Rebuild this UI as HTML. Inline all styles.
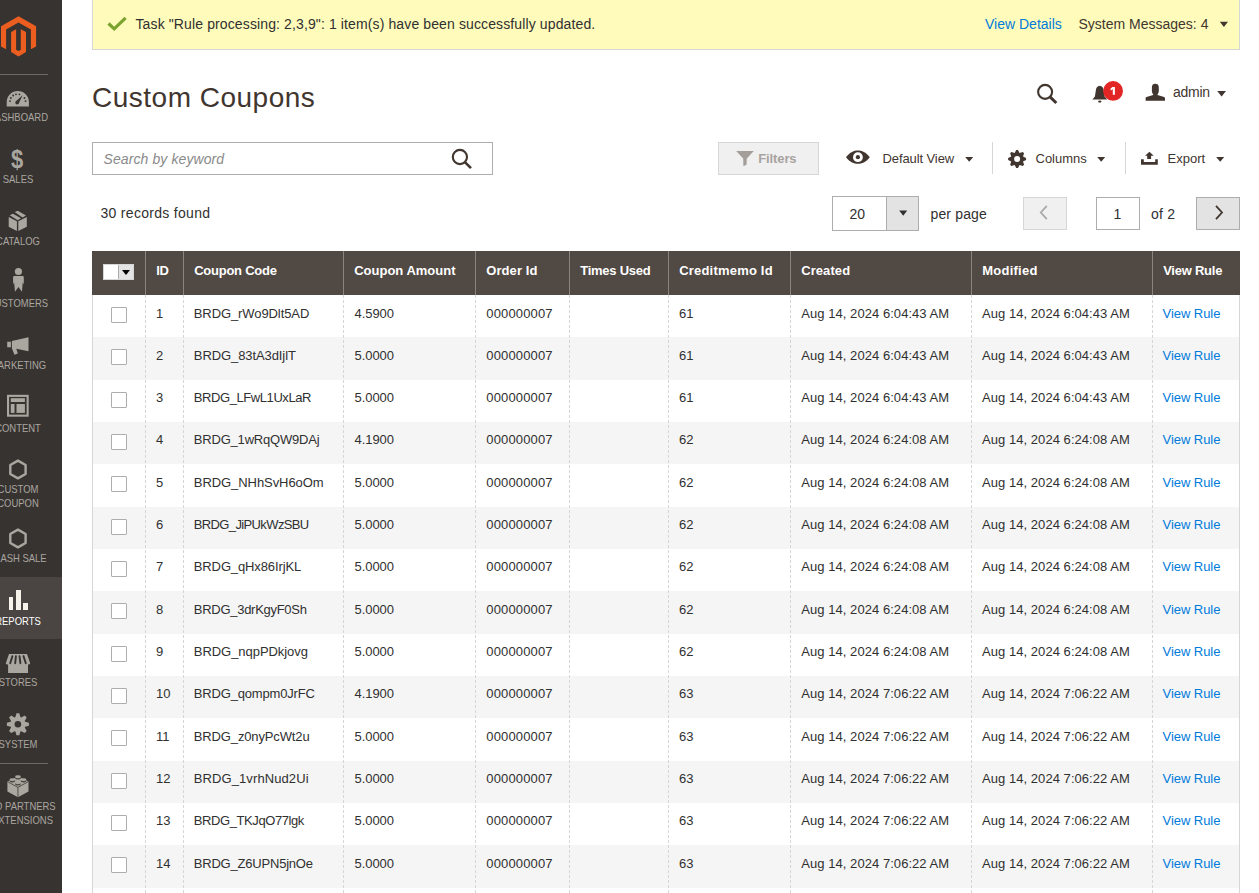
<!DOCTYPE html><html><head><meta charset="utf-8"><style>
html,body{margin:0;padding:0;}
body{width:1259px;height:893px;overflow:hidden;position:relative;background:#fff;font-family:"Liberation Sans", sans-serif;}
.t{position:absolute;white-space:pre;}
.b{position:absolute;box-sizing:border-box;}
</style></head><body>
<div class="b" style="left:0px;top:0px;width:62px;height:893px;background:#373330"></div>
<svg class="b" style="left:0px;top:14px" width="40" height="45" viewBox="0 0 40 45"><path fill="#eb5e1f" d="M18.5 2.3 L36.1 12.25 V32.5 L30.9 35.3 V15.5 L18.5 8.4 L6.1 15.5 V35.3 L1 32.5 V12.25 Z"/><path fill="#eb5e1f" d="M11.1 18.1 L16.1 15.2 V35.7 L18.5 37 L20.8 35.7 V15.2 L26 18.1 V38.1 L18.5 42.6 L11.1 38.1 Z"/></svg>
<div class="b" style="left:0px;top:74px;width:48px;height:1px;background:#736963"></div>
<div class="b" style="left:0px;top:577px;width:62px;height:62px;background:#4a4542"></div>
<div class="t" style="left:-82px;width:200px;text-align:center;top:110.19px;font-size:11px;line-height:14px;color:#aaa6a0;transform:scaleX(0.86);transform-origin:50% 0;">DASHBOARD</div>
<div class="t" style="left:-82px;width:200px;text-align:center;top:172.49px;font-size:11px;line-height:14px;color:#aaa6a0;transform:scaleX(0.86);transform-origin:50% 0;">SALES</div>
<div class="t" style="left:-82px;width:200px;text-align:center;top:234.19px;font-size:11px;line-height:14px;color:#aaa6a0;transform:scaleX(0.86);transform-origin:50% 0;">CATALOG</div>
<div class="t" style="left:-82px;width:200px;text-align:center;top:296.49px;font-size:11px;line-height:14px;color:#aaa6a0;transform:scaleX(0.86);transform-origin:50% 0;">CUSTOMERS</div>
<div class="t" style="left:-82px;width:200px;text-align:center;top:358.29px;font-size:11px;line-height:14px;color:#aaa6a0;transform:scaleX(0.86);transform-origin:50% 0;">MARKETING</div>
<div class="t" style="left:-82px;width:200px;text-align:center;top:420.59px;font-size:11px;line-height:14px;color:#aaa6a0;transform:scaleX(0.86);transform-origin:50% 0;">CONTENT</div>
<div class="t" style="left:-82px;width:200px;text-align:center;top:482.09px;font-size:11px;line-height:14px;color:#aaa6a0;transform:scaleX(0.86);transform-origin:50% 0;">CUSTOM</div>
<div class="t" style="left:-82px;width:200px;text-align:center;top:496.39px;font-size:11px;line-height:14px;color:#aaa6a0;transform:scaleX(0.86);transform-origin:50% 0;">COUPON</div>
<div class="t" style="left:-82px;width:200px;text-align:center;top:551.39px;font-size:11px;line-height:14px;color:#aaa6a0;transform:scaleX(0.86);transform-origin:50% 0;">FLASH SALE</div>
<div class="t" style="left:-82px;width:200px;text-align:center;top:613.69px;font-size:11px;line-height:14px;color:#ffffff;transform:scaleX(0.86);transform-origin:50% 0;">REPORTS</div>
<div class="t" style="left:-82px;width:200px;text-align:center;top:675.29px;font-size:11px;line-height:14px;color:#aaa6a0;transform:scaleX(0.86);transform-origin:50% 0;">STORES</div>
<div class="t" style="left:-82px;width:200px;text-align:center;top:737.49px;font-size:11px;line-height:14px;color:#aaa6a0;transform:scaleX(0.86);transform-origin:50% 0;">SYSTEM</div>
<div class="t" style="left:-82px;width:200px;text-align:center;top:799.49px;font-size:11px;line-height:14px;color:#aaa6a0;transform:scaleX(0.86);transform-origin:50% 0;">FIND PARTNERS</div>
<div class="t" style="left:-82px;width:200px;text-align:center;top:813.39px;font-size:11px;line-height:14px;color:#aaa6a0;transform:scaleX(0.86);transform-origin:50% 0;">&amp; EXTENSIONS</div>
<div class="b" style="left:0px;top:763px;width:48px;height:1px;background:#736963"></div>
<svg class="b" style="left:6px;top:90px" width="24" height="18" viewBox="0 0 24 18"><path fill="#aaa6a0" d="M0.7 16.6 V12 A11.1 11.1 0 0 1 22.9 12 V16.6 Z"/><g fill="#373330"><circle cx="4.03" cy="11.08" r="0.95"/><circle cx="4.8" cy="7.95" r="0.95"/><circle cx="7.17" cy="5.44" r="0.95"/><circle cx="9.99" cy="4.34" r="0.95"/><circle cx="13.44" cy="4.34" r="0.95"/><circle cx="18.45" cy="7.95" r="0.95"/><circle cx="19.55" cy="11.08" r="0.95"/><path d="M16.6 5.2 L13.2 12.4 A1.95 1.95 0 1 1 10.1 10.9 Z"/></g></svg>
<div class="t" style="left:5.4px;top:144px;width:24px;text-align:center;font-size:25px;line-height:30px;font-weight:700;color:#aaa6a0;transform:scaleX(0.88)">$</div>
<svg class="b" style="left:8px;top:210px" width="20" height="22" viewBox="0 0 20 22"><path fill="#aaa6a0" d="M6.7 2.1 L9.7 0.8 L18 5.5 L14.6 7.5 Z M1.7 5.3 L4.9 3.7 L13 8.3 L9.7 10.2 Z M0.7 7.1 L8.9 11.2 V21 L0.7 16.8 Z M10.3 11.2 L18.8 6.9 V16.8 L10.3 21 Z"/></svg>
<svg class="b" style="left:12px;top:267px" width="13" height="26" viewBox="0 0 13 26"><circle fill="#aaa6a0" cx="6.45" cy="4.5" r="3.6"/><path fill="#aaa6a0" d="M2.4 8.9 H10.5 Q11.8 8.9 11.8 10.2 L11.8 17.4 L10.8 15.2 L9.9 24.7 L6.45 19.9 L3 24.7 L2.1 15.2 L1.1 17.4 V10.2 Q1.1 8.9 2.4 8.9 Z"/></svg>
<svg class="b" style="left:6px;top:336px" width="24" height="20" viewBox="0 0 24 20"><path fill="#aaa6a0" d="M1.2 5.75 H4.9 V11.3 H1.2 Z M5.9 5.1 L22.5 1.2 V15.2 L10.3 12.8 L11.8 17.5 L8.4 18.8 L5.9 12.2 Z"/></svg>
<svg class="b" style="left:6px;top:394px" width="24" height="24" viewBox="0 0 24 24"><rect x="2.05" y="1.85" width="19.6" height="19.8" fill="none" stroke="#aaa6a0" stroke-width="2.1"/><rect x="4.8" y="4.2" width="14.1" height="3.8" fill="#aaa6a0"/><rect x="4.8" y="10" width="3.7" height="8.9" fill="#aaa6a0"/><rect x="10.5" y="10" width="8.4" height="8.9" fill="#aaa6a0"/></svg>
<svg class="b" style="left:7px;top:458px" width="22" height="23" viewBox="0 0 22 23"><path fill="none" stroke="#aaa6a0" stroke-width="2.4" stroke-linejoin="round" d="M10.95 2.65 L18.6 7.05 V15.95 L10.95 20.35 L3.3 15.95 V7.05 Z"/></svg>
<svg class="b" style="left:7px;top:527px" width="22" height="23" viewBox="0 0 22 23"><path fill="none" stroke="#aaa6a0" stroke-width="2.4" stroke-linejoin="round" d="M10.95 2.65 L18.6 7.05 V15.95 L10.95 20.35 L3.3 15.95 V7.05 Z"/></svg>
<div class="b" style="left:8.7px;top:596.5px;width:4.7px;height:13.5px;background:#f7f3eb"></div>
<div class="b" style="left:15.9px;top:590px;width:4.9px;height:20px;background:#f7f3eb"></div>
<div class="b" style="left:22.9px;top:603px;width:5.1px;height:7px;background:#f7f3eb"></div>
<svg class="b" style="left:5px;top:653px" width="26" height="21" viewBox="0 0 26 21"><path fill="#aaa6a0" d="M3.1 11 H23 V20 H3.1 Z M4 0.9 H22 L25.2 10.2 Q25 11.6 23.5 11.6 H2.5 Q1 11.6 0.8 10.2 Z"/><path stroke="#373330" stroke-width="1.9" stroke-linecap="round" d="M7.4 3.1 L5.2 10.2 M10.9 3.1 L10.2 10.2 M14.5 3.1 L15.4 10.2 M18.5 3.1 L20.8 10.2"/></svg>
<svg class="b" style="left:6px;top:712px" width="24" height="25" viewBox="0 0 24 25"><path fill="#aaa6a0" d="M19.08 9.81 L22.91 10.87 L22.91 13.73 L19.08 14.79 L18.74 15.62 L20.70 19.07 L18.67 21.10 L15.22 19.14 L14.39 19.48 L13.33 23.31 L10.47 23.31 L9.41 19.48 L8.58 19.14 L5.13 21.10 L3.10 19.07 L5.06 15.62 L4.72 14.79 L0.89 13.73 L0.89 10.87 L4.72 9.81 L5.06 8.98 L3.10 5.53 L5.13 3.50 L8.58 5.46 L9.41 5.12 L10.47 1.29 L13.33 1.29 L14.39 5.12 L15.22 5.46 L18.67 3.50 L20.70 5.53 L18.74 8.98 Z"/><circle cx="11.9" cy="12.3" r="3.3" fill="#373330"/></svg>
<svg class="b" style="left:6px;top:774px" width="24" height="25" viewBox="0 0 24 25"><path fill="#aaa6a0" d="M1.4 7.5 L11.95 2.5 L22.5 7.5 V17.5 L11.95 23.2 L1.4 17.5 Z"/><path fill="none" stroke="#4a4541" stroke-width="0.9" d="M1.4 7.5 L11.95 13.4 L22.5 7.5 M11.95 13.4 V23.2"/><ellipse cx="11.95" cy="4.0" rx="2.9" ry="1.55" fill="#4a4541"/><ellipse cx="11.95" cy="2.8" rx="2.9" ry="1.45" fill="#aaa6a0"/><ellipse cx="6.4" cy="6.85" rx="2.9" ry="1.55" fill="#4a4541"/><ellipse cx="6.4" cy="5.65" rx="2.9" ry="1.45" fill="#aaa6a0"/><ellipse cx="17.5" cy="6.85" rx="2.9" ry="1.55" fill="#4a4541"/><ellipse cx="17.5" cy="5.65" rx="2.9" ry="1.45" fill="#aaa6a0"/><ellipse cx="11.95" cy="10.0" rx="2.9" ry="1.55" fill="#4a4541"/><ellipse cx="11.95" cy="8.8" rx="2.9" ry="1.45" fill="#aaa6a0"/></svg>
<div class="b" style="left:92px;top:0px;width:1148px;height:50px;background:#fffbbb;border:1px solid #d6d6d6;border-top:0"></div>
<svg class="b" style="left:106px;top:15px" width="22" height="17" viewBox="0 0 22 17"><path fill="none" stroke="#79a22e" stroke-width="3.2" d="M2.5 8.5 L8.2 13.8 L19.6 2.8"/></svg>
<div class="t" style="left:135.50px;top:14.95px;font-size:14px;line-height:18px;color:#303030;font-weight:400;font-style:normal;letter-spacing:0.12px;">Task "Rule processing: 2,3,9": 1 item(s) have been successfully updated.</div>
<div class="t" style="left:985.00px;top:15.35px;font-size:14px;line-height:18px;color:#007bdb;font-weight:400;font-style:normal;letter-spacing:0px;">View Details</div>
<div class="t" style="left:1078.50px;top:15.35px;font-size:14px;line-height:18px;color:#41362f;font-weight:400;font-style:normal;letter-spacing:0px;">System Messages: 4</div>
<svg class="b" style="left:1219px;top:21px" width="10" height="7" viewBox="0 0 10 7"><path fill="#41362f" d="M0.8 0.8 H9 L4.9 6 Z"/></svg>
<div class="t" style="left:92.00px;top:80.30px;font-size:28px;line-height:35px;color:#41362f;font-weight:400;font-style:normal;letter-spacing:0.5px;">Custom Coupons</div>
<svg class="b" style="left:1035px;top:82px" width="25" height="25" viewBox="0 0 25 25"><circle cx="10.1" cy="9.85" r="7" fill="none" stroke="#41362f" stroke-width="2.1"/><path stroke="#41362f" stroke-width="2.9" d="M14.8 14.6 L21.3 21"/></svg>
<svg class="b" style="left:1091px;top:84px" width="18" height="20" viewBox="0 0 18 20"><path fill="#41362f" d="M8.7 1.8 C6.6 2.2 5.3 3.3 5 5.5 L3.9 12.6 L1.4 15.6 H16.2 L13.6 12.6 L12.5 5.5 C12.2 3.3 10.9 2.2 8.7 1.8 Z"/><ellipse cx="8.8" cy="17.6" rx="1.7" ry="1.1" fill="#41362f"/></svg>
<svg class="b" style="left:1102px;top:80px" width="22" height="22" viewBox="0 0 22 22"><circle cx="11.07" cy="10.96" r="9.9" fill="#e22626"/><path fill="#fff" d="M10.4 6.9 H12.9 V14.8 H10.8 V9.3 L8.9 10.4 L8.4 8.7 Z"/></svg>
<svg class="b" style="left:1145px;top:83px" width="21" height="19" viewBox="0 0 21 19"><path fill="#41362f" d="M10.35 0.8 C7.8 0.8 6.9 2.3 6.9 4.5 V8 C6.9 9.5 7.6 10.6 8.2 11.4 V12 L1.5 14 Q0.6 14.3 0.6 15.2 V17.7 H20 V15.2 Q20 14.3 19.1 14 L12.5 12 V11.4 C13.1 10.6 13.8 9.5 13.8 8 V4.5 C13.8 2.3 12.9 0.8 10.35 0.8 Z"/></svg>
<div class="t" style="left:1173.00px;top:83.25px;font-size:14px;line-height:18px;color:#41362f;font-weight:400;font-style:normal;letter-spacing:-0.25px;">admin</div>
<svg class="b" style="left:1216px;top:90px" width="11" height="8" viewBox="0 0 11 8"><path fill="#41362f" d="M1.2 1 H10 L5.6 6.6 Z"/></svg>
<div class="b" style="left:92px;top:142px;width:401px;height:33px;background:#fff;border:1px solid #adadad"></div>
<div class="t" style="left:103.50px;top:150.25px;font-size:14px;line-height:18px;color:#8a8a8a;font-weight:400;font-style:italic;letter-spacing:0.1px;">Search by keyword</div>
<svg class="b" style="left:450px;top:148px" width="24" height="23" viewBox="0 0 24 23"><circle cx="9.9" cy="9" r="7.1" fill="none" stroke="#41362f" stroke-width="2.1"/><path stroke="#41362f" stroke-width="2.6" d="M14.6 13.8 L21 20.2"/></svg>
<div class="b" style="left:718px;top:142px;width:101px;height:33px;background:#f0f0f0;border:1px solid #d6d6d6"></div>
<svg class="b" style="left:735px;top:150px" width="20" height="17" viewBox="0 0 20 17"><path fill="#a39e9a" d="M1.2 1 H18.8 L11.8 8.6 L11.5 14.8 L8.4 16.2 L8.2 8.6 Z"/></svg>
<div class="t" style="left:758.30px;top:151.00px;font-size:13px;line-height:16px;color:#a8a39f;font-weight:700;font-style:normal;letter-spacing:-0.12px;">Filters</div>
<svg class="b" style="left:845px;top:150px" width="26" height="15" viewBox="0 0 26 15"><path fill="#41362f" d="M1 7.2 C5 2.2 9 0.6 12.9 0.6 C16.8 0.6 20.8 2.2 24.8 7.2 C20.8 12.2 16.8 13.8 12.9 13.8 C9 13.8 5 12.2 1 7.2 Z"/><circle cx="12.9" cy="7.2" r="4.9" fill="#fff"/><circle cx="12.9" cy="7.2" r="2.1" fill="#41362f"/></svg>
<div class="t" style="left:882.50px;top:151.00px;font-size:13px;line-height:16px;color:#41362f;font-weight:400;font-style:normal;letter-spacing:-0.1px;">Default View</div>
<svg class="b" style="left:964px;top:156px" width="10" height="7" viewBox="0 0 10 7"><path fill="#41362f" d="M1.2 1 H9.2 L5.2 5.8 Z"/></svg>
<div class="b" style="left:992px;top:142px;width:1px;height:32px;background:#d6d6d6"></div>
<svg class="b" style="left:1006px;top:149px" width="22" height="20" viewBox="0 0 22 20"><path fill="#41362f" d="M17.01 7.55 L20.06 9.12 L20.06 10.88 L17.01 12.45 L17.01 12.45 L18.06 15.71 L16.81 16.96 L13.55 15.91 L13.55 15.91 L11.98 18.96 L10.22 18.96 L8.65 15.91 L8.65 15.91 L5.39 16.96 L4.14 15.71 L5.19 12.45 L5.19 12.45 L2.14 10.88 L2.14 9.12 L5.19 7.55 L5.19 7.55 L4.14 4.29 L5.39 3.04 L8.65 4.09 L8.65 4.09 L10.22 1.04 L11.98 1.04 L13.55 4.09 L13.55 4.09 L16.81 3.04 L18.06 4.29 L17.01 7.55 Z"/><circle cx="11.1" cy="10.0" r="3.0" fill="#fff"/></svg>
<div class="t" style="left:1035.50px;top:150.80px;font-size:13px;line-height:16px;color:#41362f;font-weight:400;font-style:normal;letter-spacing:0px;">Columns</div>
<svg class="b" style="left:1096px;top:156px" width="10" height="7" viewBox="0 0 10 7"><path fill="#41362f" d="M1.2 1 H9.2 L5.2 5.8 Z"/></svg>
<div class="b" style="left:1125px;top:142px;width:1px;height:32px;background:#d6d6d6"></div>
<svg class="b" style="left:1140px;top:151px" width="19" height="15" viewBox="0 0 19 15"><path fill="#41362f" d="M9.4 0.7 L13.7 4.7 H11.1 V8 H7.2 V4.7 H5.1 Z M1 8.3 H3.8 V10.9 H15.2 V8.3 H17.8 V13.7 H1 Z"/></svg>
<div class="t" style="left:1167.50px;top:150.80px;font-size:13px;line-height:16px;color:#41362f;font-weight:400;font-style:normal;letter-spacing:0px;">Export</div>
<svg class="b" style="left:1215px;top:156px" width="10" height="7" viewBox="0 0 10 7"><path fill="#41362f" d="M1.2 1 H9.2 L5.2 5.8 Z"/></svg>
<div class="t" style="left:100.50px;top:203.75px;font-size:14px;line-height:18px;color:#303030;font-weight:400;font-style:normal;letter-spacing:0.3px;">30 records found</div>
<div class="b" style="left:832px;top:196px;width:87px;height:35px;background:#fff;border:1px solid #adadad"></div>
<div class="b" style="left:886px;top:197px;width:32px;height:33px;background:#e3e3e3;border-left:1px solid #adadad"></div>
<div class="t" style="left:849.50px;top:205.05px;font-size:14px;line-height:18px;color:#303030;font-weight:400;font-style:normal;letter-spacing:0px;">20</div>
<svg class="b" style="left:898px;top:209px" width="11" height="8" viewBox="0 0 11 8"><path fill="#303030" d="M1.2 1.6 H9.2 L5.2 6.7 Z"/></svg>
<div class="t" style="left:930.50px;top:205.05px;font-size:14px;line-height:18px;color:#303030;font-weight:400;font-style:normal;letter-spacing:0.15px;">per page</div>
<div class="b" style="left:1023px;top:197px;width:44px;height:33px;background:#f0f0f0;border:1px solid #d6d6d6"></div>
<svg class="b" style="left:1037px;top:204px" width="12" height="17" viewBox="0 0 12 17"><path fill="none" stroke="#a9a9a9" stroke-width="1.8" d="M9.8 1.8 L3.8 8.5 L9.8 15.2"/></svg>
<div class="b" style="left:1096px;top:197px;width:44px;height:33px;background:#fff;border:1px solid #adadad"></div>
<div class="t" style="left:1113.50px;top:205.05px;font-size:14px;line-height:18px;color:#303030;font-weight:400;font-style:normal;letter-spacing:0px;">1</div>
<div class="t" style="left:1151.00px;top:205.05px;font-size:14px;line-height:18px;color:#303030;font-weight:400;font-style:normal;letter-spacing:0.2px;">of 2</div>
<div class="b" style="left:1196px;top:197px;width:44px;height:33px;background:#e3e3e3;border:1px solid #adadad"></div>
<svg class="b" style="left:1213px;top:204px" width="12" height="17" viewBox="0 0 12 17"><path fill="none" stroke="#41362f" stroke-width="1.8" d="M3 1.8 L9 8.5 L3 15.2"/></svg>
<div class="b" style="left:92px;top:251px;width:1148px;height:44px;background:#514943"></div>
<div class="b" style="left:145px;top:251px;width:1px;height:44px;background:#8a837f"></div>
<div class="b" style="left:183px;top:251px;width:1px;height:44px;background:#8a837f"></div>
<div class="b" style="left:343px;top:251px;width:1px;height:44px;background:#8a837f"></div>
<div class="b" style="left:475px;top:251px;width:1px;height:44px;background:#8a837f"></div>
<div class="b" style="left:569px;top:251px;width:1px;height:44px;background:#8a837f"></div>
<div class="b" style="left:668px;top:251px;width:1px;height:44px;background:#8a837f"></div>
<div class="b" style="left:790px;top:251px;width:1px;height:44px;background:#8a837f"></div>
<div class="b" style="left:971px;top:251px;width:1px;height:44px;background:#8a837f"></div>
<div class="b" style="left:1152px;top:251px;width:1px;height:44px;background:#8a837f"></div>
<div class="b" style="left:103px;top:264px;width:31px;height:16px;background:#e3e3e3;border:1px solid #d6d6d6"></div>
<div class="b" style="left:104px;top:265px;width:14.5px;height:14px;background:#fff;border-right:1px solid #adadad"></div>
<svg class="b" style="left:121px;top:269px" width="10" height="7" viewBox="0 0 10 7"><path fill="#000" d="M1 1 H9 L5 5.9 Z"/></svg>
<div class="t" style="left:156.20px;top:262.80px;font-size:13px;line-height:16px;color:#ffffff;font-weight:700;font-style:normal;letter-spacing:-0.25px;">ID</div>
<div class="t" style="left:194.20px;top:262.80px;font-size:13px;line-height:16px;color:#ffffff;font-weight:700;font-style:normal;letter-spacing:-0.25px;">Coupon Code</div>
<div class="t" style="left:354.20px;top:262.80px;font-size:13px;line-height:16px;color:#ffffff;font-weight:700;font-style:normal;letter-spacing:0.0px;">Coupon Amount</div>
<div class="t" style="left:486.20px;top:262.80px;font-size:13px;line-height:16px;color:#ffffff;font-weight:700;font-style:normal;letter-spacing:0.1px;">Order Id</div>
<div class="t" style="left:580.20px;top:262.80px;font-size:13px;line-height:16px;color:#ffffff;font-weight:700;font-style:normal;letter-spacing:-0.25px;">Times Used</div>
<div class="t" style="left:679.20px;top:262.80px;font-size:13px;line-height:16px;color:#ffffff;font-weight:700;font-style:normal;letter-spacing:0.2px;">Creditmemo Id</div>
<div class="t" style="left:801.20px;top:262.80px;font-size:13px;line-height:16px;color:#ffffff;font-weight:700;font-style:normal;letter-spacing:0.08px;">Created</div>
<div class="t" style="left:982.20px;top:262.80px;font-size:13px;line-height:16px;color:#ffffff;font-weight:700;font-style:normal;letter-spacing:0.25px;">Modified</div>
<div class="t" style="left:1163.20px;top:262.80px;font-size:13px;line-height:16px;color:#ffffff;font-weight:700;font-style:normal;letter-spacing:-0.25px;">View Rule</div>
<div class="b" style="left:92px;top:295px;width:1px;height:598px;background:#d6d6d6"></div>
<div class="b" style="left:1239px;top:295px;width:1px;height:598px;background:#d6d6d6"></div>
<div class="b" style="left:111px;top:307px;width:16px;height:16px;background:#fff;border:1px solid #adadad;border-radius:1px"></div>
<div class="t" style="left:156.00px;top:305.50px;font-size:13px;line-height:16px;color:#303030;font-weight:400;font-style:normal;letter-spacing:-0.05px;">1</div>
<div class="t" style="left:193.80px;top:305.50px;font-size:13px;line-height:16px;color:#303030;font-weight:400;font-style:normal;letter-spacing:-0.093px;">BRDG_rWo9Dlt5AD</div>
<div class="t" style="left:354.50px;top:305.50px;font-size:13px;line-height:16px;color:#303030;font-weight:400;font-style:normal;letter-spacing:-0.05px;">4.5900</div>
<div class="t" style="left:486.30px;top:305.50px;font-size:13px;line-height:16px;color:#303030;font-weight:400;font-style:normal;letter-spacing:0.15px;">000000007</div>
<div class="t" style="left:679.00px;top:305.50px;font-size:13px;line-height:16px;color:#303030;font-weight:400;font-style:normal;letter-spacing:-0.05px;">61</div>
<div class="t" style="left:801.30px;top:305.50px;font-size:13px;line-height:16px;color:#303030;font-weight:400;font-style:normal;letter-spacing:0.05px;">Aug 14, 2024 6:04:43 AM</div>
<div class="t" style="left:982.00px;top:305.50px;font-size:13px;line-height:16px;color:#303030;font-weight:400;font-style:normal;letter-spacing:0.05px;">Aug 14, 2024 6:04:43 AM</div>
<div class="t" style="left:1162.50px;top:305.50px;font-size:13px;line-height:16px;color:#007bdb;font-weight:400;font-style:normal;letter-spacing:-0.05px;">View Rule</div>
<div class="b" style="left:93px;top:337.33px;width:1146px;height:42.33px;background:#f5f5f5"></div>
<div class="b" style="left:111px;top:349px;width:16px;height:16px;background:#fff;border:1px solid #adadad;border-radius:1px"></div>
<div class="t" style="left:156.00px;top:347.83px;font-size:13px;line-height:16px;color:#303030;font-weight:400;font-style:normal;letter-spacing:-0.05px;">2</div>
<div class="t" style="left:193.80px;top:347.83px;font-size:13px;line-height:16px;color:#303030;font-weight:400;font-style:normal;letter-spacing:-0.086px;">BRDG_83tA3dIjlT</div>
<div class="t" style="left:354.50px;top:347.83px;font-size:13px;line-height:16px;color:#303030;font-weight:400;font-style:normal;letter-spacing:-0.05px;">5.0000</div>
<div class="t" style="left:486.30px;top:347.83px;font-size:13px;line-height:16px;color:#303030;font-weight:400;font-style:normal;letter-spacing:0.15px;">000000007</div>
<div class="t" style="left:679.00px;top:347.83px;font-size:13px;line-height:16px;color:#303030;font-weight:400;font-style:normal;letter-spacing:-0.05px;">61</div>
<div class="t" style="left:801.30px;top:347.83px;font-size:13px;line-height:16px;color:#303030;font-weight:400;font-style:normal;letter-spacing:0.05px;">Aug 14, 2024 6:04:43 AM</div>
<div class="t" style="left:982.00px;top:347.83px;font-size:13px;line-height:16px;color:#303030;font-weight:400;font-style:normal;letter-spacing:0.05px;">Aug 14, 2024 6:04:43 AM</div>
<div class="t" style="left:1162.50px;top:347.83px;font-size:13px;line-height:16px;color:#007bdb;font-weight:400;font-style:normal;letter-spacing:-0.05px;">View Rule</div>
<div class="b" style="left:111px;top:392px;width:16px;height:16px;background:#fff;border:1px solid #adadad;border-radius:1px"></div>
<div class="t" style="left:156.00px;top:390.16px;font-size:13px;line-height:16px;color:#303030;font-weight:400;font-style:normal;letter-spacing:-0.05px;">3</div>
<div class="t" style="left:193.80px;top:390.16px;font-size:13px;line-height:16px;color:#303030;font-weight:400;font-style:normal;letter-spacing:-0.421px;">BRDG_LFwL1UxLaR</div>
<div class="t" style="left:354.50px;top:390.16px;font-size:13px;line-height:16px;color:#303030;font-weight:400;font-style:normal;letter-spacing:-0.05px;">5.0000</div>
<div class="t" style="left:486.30px;top:390.16px;font-size:13px;line-height:16px;color:#303030;font-weight:400;font-style:normal;letter-spacing:0.15px;">000000007</div>
<div class="t" style="left:679.00px;top:390.16px;font-size:13px;line-height:16px;color:#303030;font-weight:400;font-style:normal;letter-spacing:-0.05px;">61</div>
<div class="t" style="left:801.30px;top:390.16px;font-size:13px;line-height:16px;color:#303030;font-weight:400;font-style:normal;letter-spacing:0.05px;">Aug 14, 2024 6:04:43 AM</div>
<div class="t" style="left:982.00px;top:390.16px;font-size:13px;line-height:16px;color:#303030;font-weight:400;font-style:normal;letter-spacing:0.05px;">Aug 14, 2024 6:04:43 AM</div>
<div class="t" style="left:1162.50px;top:390.16px;font-size:13px;line-height:16px;color:#007bdb;font-weight:400;font-style:normal;letter-spacing:-0.05px;">View Rule</div>
<div class="b" style="left:93px;top:421.99px;width:1146px;height:42.33px;background:#f5f5f5"></div>
<div class="b" style="left:111px;top:434px;width:16px;height:16px;background:#fff;border:1px solid #adadad;border-radius:1px"></div>
<div class="t" style="left:156.00px;top:432.49px;font-size:13px;line-height:16px;color:#303030;font-weight:400;font-style:normal;letter-spacing:-0.05px;">4</div>
<div class="t" style="left:193.80px;top:432.49px;font-size:13px;line-height:16px;color:#303030;font-weight:400;font-style:normal;letter-spacing:-0.193px;">BRDG_1wRqQW9DAj</div>
<div class="t" style="left:354.50px;top:432.49px;font-size:13px;line-height:16px;color:#303030;font-weight:400;font-style:normal;letter-spacing:-0.05px;">4.1900</div>
<div class="t" style="left:486.30px;top:432.49px;font-size:13px;line-height:16px;color:#303030;font-weight:400;font-style:normal;letter-spacing:0.15px;">000000007</div>
<div class="t" style="left:679.00px;top:432.49px;font-size:13px;line-height:16px;color:#303030;font-weight:400;font-style:normal;letter-spacing:-0.05px;">62</div>
<div class="t" style="left:801.30px;top:432.49px;font-size:13px;line-height:16px;color:#303030;font-weight:400;font-style:normal;letter-spacing:0.05px;">Aug 14, 2024 6:24:08 AM</div>
<div class="t" style="left:982.00px;top:432.49px;font-size:13px;line-height:16px;color:#303030;font-weight:400;font-style:normal;letter-spacing:0.05px;">Aug 14, 2024 6:24:08 AM</div>
<div class="t" style="left:1162.50px;top:432.49px;font-size:13px;line-height:16px;color:#007bdb;font-weight:400;font-style:normal;letter-spacing:-0.05px;">View Rule</div>
<div class="b" style="left:111px;top:476px;width:16px;height:16px;background:#fff;border:1px solid #adadad;border-radius:1px"></div>
<div class="t" style="left:156.00px;top:474.82px;font-size:13px;line-height:16px;color:#303030;font-weight:400;font-style:normal;letter-spacing:-0.05px;">5</div>
<div class="t" style="left:193.80px;top:474.82px;font-size:13px;line-height:16px;color:#303030;font-weight:400;font-style:normal;letter-spacing:-0.064px;">BRDG_NHhSvH6oOm</div>
<div class="t" style="left:354.50px;top:474.82px;font-size:13px;line-height:16px;color:#303030;font-weight:400;font-style:normal;letter-spacing:-0.05px;">5.0000</div>
<div class="t" style="left:486.30px;top:474.82px;font-size:13px;line-height:16px;color:#303030;font-weight:400;font-style:normal;letter-spacing:0.15px;">000000007</div>
<div class="t" style="left:679.00px;top:474.82px;font-size:13px;line-height:16px;color:#303030;font-weight:400;font-style:normal;letter-spacing:-0.05px;">62</div>
<div class="t" style="left:801.30px;top:474.82px;font-size:13px;line-height:16px;color:#303030;font-weight:400;font-style:normal;letter-spacing:0.05px;">Aug 14, 2024 6:24:08 AM</div>
<div class="t" style="left:982.00px;top:474.82px;font-size:13px;line-height:16px;color:#303030;font-weight:400;font-style:normal;letter-spacing:0.05px;">Aug 14, 2024 6:24:08 AM</div>
<div class="t" style="left:1162.50px;top:474.82px;font-size:13px;line-height:16px;color:#007bdb;font-weight:400;font-style:normal;letter-spacing:-0.05px;">View Rule</div>
<div class="b" style="left:93px;top:506.65px;width:1146px;height:42.33px;background:#f5f5f5"></div>
<div class="b" style="left:111px;top:519px;width:16px;height:16px;background:#fff;border:1px solid #adadad;border-radius:1px"></div>
<div class="t" style="left:156.00px;top:517.15px;font-size:13px;line-height:16px;color:#303030;font-weight:400;font-style:normal;letter-spacing:-0.05px;">6</div>
<div class="t" style="left:193.80px;top:517.15px;font-size:13px;line-height:16px;color:#303030;font-weight:400;font-style:normal;letter-spacing:-0.629px;">BRDG_JiPUkWzSBU</div>
<div class="t" style="left:354.50px;top:517.15px;font-size:13px;line-height:16px;color:#303030;font-weight:400;font-style:normal;letter-spacing:-0.05px;">5.0000</div>
<div class="t" style="left:486.30px;top:517.15px;font-size:13px;line-height:16px;color:#303030;font-weight:400;font-style:normal;letter-spacing:0.15px;">000000007</div>
<div class="t" style="left:679.00px;top:517.15px;font-size:13px;line-height:16px;color:#303030;font-weight:400;font-style:normal;letter-spacing:-0.05px;">62</div>
<div class="t" style="left:801.30px;top:517.15px;font-size:13px;line-height:16px;color:#303030;font-weight:400;font-style:normal;letter-spacing:0.05px;">Aug 14, 2024 6:24:08 AM</div>
<div class="t" style="left:982.00px;top:517.15px;font-size:13px;line-height:16px;color:#303030;font-weight:400;font-style:normal;letter-spacing:0.05px;">Aug 14, 2024 6:24:08 AM</div>
<div class="t" style="left:1162.50px;top:517.15px;font-size:13px;line-height:16px;color:#007bdb;font-weight:400;font-style:normal;letter-spacing:-0.05px;">View Rule</div>
<div class="b" style="left:111px;top:561px;width:16px;height:16px;background:#fff;border:1px solid #adadad;border-radius:1px"></div>
<div class="t" style="left:156.00px;top:559.48px;font-size:13px;line-height:16px;color:#303030;font-weight:400;font-style:normal;letter-spacing:-0.05px;">7</div>
<div class="t" style="left:193.80px;top:559.48px;font-size:13px;line-height:16px;color:#303030;font-weight:400;font-style:normal;letter-spacing:-0.121px;">BRDG_qHx86IrjKL</div>
<div class="t" style="left:354.50px;top:559.48px;font-size:13px;line-height:16px;color:#303030;font-weight:400;font-style:normal;letter-spacing:-0.05px;">5.0000</div>
<div class="t" style="left:486.30px;top:559.48px;font-size:13px;line-height:16px;color:#303030;font-weight:400;font-style:normal;letter-spacing:0.15px;">000000007</div>
<div class="t" style="left:679.00px;top:559.48px;font-size:13px;line-height:16px;color:#303030;font-weight:400;font-style:normal;letter-spacing:-0.05px;">62</div>
<div class="t" style="left:801.30px;top:559.48px;font-size:13px;line-height:16px;color:#303030;font-weight:400;font-style:normal;letter-spacing:0.05px;">Aug 14, 2024 6:24:08 AM</div>
<div class="t" style="left:982.00px;top:559.48px;font-size:13px;line-height:16px;color:#303030;font-weight:400;font-style:normal;letter-spacing:0.05px;">Aug 14, 2024 6:24:08 AM</div>
<div class="t" style="left:1162.50px;top:559.48px;font-size:13px;line-height:16px;color:#007bdb;font-weight:400;font-style:normal;letter-spacing:-0.05px;">View Rule</div>
<div class="b" style="left:93px;top:591.31px;width:1146px;height:42.33px;background:#f5f5f5"></div>
<div class="b" style="left:111px;top:603px;width:16px;height:16px;background:#fff;border:1px solid #adadad;border-radius:1px"></div>
<div class="t" style="left:156.00px;top:601.81px;font-size:13px;line-height:16px;color:#303030;font-weight:400;font-style:normal;letter-spacing:-0.05px;">8</div>
<div class="t" style="left:193.80px;top:601.81px;font-size:13px;line-height:16px;color:#303030;font-weight:400;font-style:normal;letter-spacing:-0.279px;">BRDG_3drKgyF0Sh</div>
<div class="t" style="left:354.50px;top:601.81px;font-size:13px;line-height:16px;color:#303030;font-weight:400;font-style:normal;letter-spacing:-0.05px;">5.0000</div>
<div class="t" style="left:486.30px;top:601.81px;font-size:13px;line-height:16px;color:#303030;font-weight:400;font-style:normal;letter-spacing:0.15px;">000000007</div>
<div class="t" style="left:679.00px;top:601.81px;font-size:13px;line-height:16px;color:#303030;font-weight:400;font-style:normal;letter-spacing:-0.05px;">62</div>
<div class="t" style="left:801.30px;top:601.81px;font-size:13px;line-height:16px;color:#303030;font-weight:400;font-style:normal;letter-spacing:0.05px;">Aug 14, 2024 6:24:08 AM</div>
<div class="t" style="left:982.00px;top:601.81px;font-size:13px;line-height:16px;color:#303030;font-weight:400;font-style:normal;letter-spacing:0.05px;">Aug 14, 2024 6:24:08 AM</div>
<div class="t" style="left:1162.50px;top:601.81px;font-size:13px;line-height:16px;color:#007bdb;font-weight:400;font-style:normal;letter-spacing:-0.05px;">View Rule</div>
<div class="b" style="left:111px;top:646px;width:16px;height:16px;background:#fff;border:1px solid #adadad;border-radius:1px"></div>
<div class="t" style="left:156.00px;top:644.14px;font-size:13px;line-height:16px;color:#303030;font-weight:400;font-style:normal;letter-spacing:-0.05px;">9</div>
<div class="t" style="left:193.80px;top:644.14px;font-size:13px;line-height:16px;color:#303030;font-weight:400;font-style:normal;letter-spacing:-0.05px;">BRDG_nqpPDkjovg</div>
<div class="t" style="left:354.50px;top:644.14px;font-size:13px;line-height:16px;color:#303030;font-weight:400;font-style:normal;letter-spacing:-0.05px;">5.0000</div>
<div class="t" style="left:486.30px;top:644.14px;font-size:13px;line-height:16px;color:#303030;font-weight:400;font-style:normal;letter-spacing:0.15px;">000000007</div>
<div class="t" style="left:679.00px;top:644.14px;font-size:13px;line-height:16px;color:#303030;font-weight:400;font-style:normal;letter-spacing:-0.05px;">62</div>
<div class="t" style="left:801.30px;top:644.14px;font-size:13px;line-height:16px;color:#303030;font-weight:400;font-style:normal;letter-spacing:0.05px;">Aug 14, 2024 6:24:08 AM</div>
<div class="t" style="left:982.00px;top:644.14px;font-size:13px;line-height:16px;color:#303030;font-weight:400;font-style:normal;letter-spacing:0.05px;">Aug 14, 2024 6:24:08 AM</div>
<div class="t" style="left:1162.50px;top:644.14px;font-size:13px;line-height:16px;color:#007bdb;font-weight:400;font-style:normal;letter-spacing:-0.05px;">View Rule</div>
<div class="b" style="left:93px;top:675.97px;width:1146px;height:42.33px;background:#f5f5f5"></div>
<div class="b" style="left:111px;top:688px;width:16px;height:16px;background:#fff;border:1px solid #adadad;border-radius:1px"></div>
<div class="t" style="left:156.00px;top:686.47px;font-size:13px;line-height:16px;color:#303030;font-weight:400;font-style:normal;letter-spacing:-0.05px;">10</div>
<div class="t" style="left:193.80px;top:686.47px;font-size:13px;line-height:16px;color:#303030;font-weight:400;font-style:normal;letter-spacing:-0.179px;">BRDG_qompm0JrFC</div>
<div class="t" style="left:354.50px;top:686.47px;font-size:13px;line-height:16px;color:#303030;font-weight:400;font-style:normal;letter-spacing:-0.05px;">4.1900</div>
<div class="t" style="left:486.30px;top:686.47px;font-size:13px;line-height:16px;color:#303030;font-weight:400;font-style:normal;letter-spacing:0.15px;">000000007</div>
<div class="t" style="left:679.00px;top:686.47px;font-size:13px;line-height:16px;color:#303030;font-weight:400;font-style:normal;letter-spacing:-0.05px;">63</div>
<div class="t" style="left:801.30px;top:686.47px;font-size:13px;line-height:16px;color:#303030;font-weight:400;font-style:normal;letter-spacing:0.05px;">Aug 14, 2024 7:06:22 AM</div>
<div class="t" style="left:982.00px;top:686.47px;font-size:13px;line-height:16px;color:#303030;font-weight:400;font-style:normal;letter-spacing:0.05px;">Aug 14, 2024 7:06:22 AM</div>
<div class="t" style="left:1162.50px;top:686.47px;font-size:13px;line-height:16px;color:#007bdb;font-weight:400;font-style:normal;letter-spacing:-0.05px;">View Rule</div>
<div class="b" style="left:111px;top:730px;width:16px;height:16px;background:#fff;border:1px solid #adadad;border-radius:1px"></div>
<div class="t" style="left:156.00px;top:728.80px;font-size:13px;line-height:16px;color:#303030;font-weight:400;font-style:normal;letter-spacing:-0.05px;">11</div>
<div class="t" style="left:193.80px;top:728.80px;font-size:13px;line-height:16px;color:#303030;font-weight:400;font-style:normal;letter-spacing:-0.136px;">BRDG_z0nyPcWt2u</div>
<div class="t" style="left:354.50px;top:728.80px;font-size:13px;line-height:16px;color:#303030;font-weight:400;font-style:normal;letter-spacing:-0.05px;">5.0000</div>
<div class="t" style="left:486.30px;top:728.80px;font-size:13px;line-height:16px;color:#303030;font-weight:400;font-style:normal;letter-spacing:0.15px;">000000007</div>
<div class="t" style="left:679.00px;top:728.80px;font-size:13px;line-height:16px;color:#303030;font-weight:400;font-style:normal;letter-spacing:-0.05px;">63</div>
<div class="t" style="left:801.30px;top:728.80px;font-size:13px;line-height:16px;color:#303030;font-weight:400;font-style:normal;letter-spacing:0.05px;">Aug 14, 2024 7:06:22 AM</div>
<div class="t" style="left:982.00px;top:728.80px;font-size:13px;line-height:16px;color:#303030;font-weight:400;font-style:normal;letter-spacing:0.05px;">Aug 14, 2024 7:06:22 AM</div>
<div class="t" style="left:1162.50px;top:728.80px;font-size:13px;line-height:16px;color:#007bdb;font-weight:400;font-style:normal;letter-spacing:-0.05px;">View Rule</div>
<div class="b" style="left:93px;top:760.63px;width:1146px;height:42.33px;background:#f5f5f5"></div>
<div class="b" style="left:111px;top:773px;width:16px;height:16px;background:#fff;border:1px solid #adadad;border-radius:1px"></div>
<div class="t" style="left:156.00px;top:771.13px;font-size:13px;line-height:16px;color:#303030;font-weight:400;font-style:normal;letter-spacing:-0.05px;">12</div>
<div class="t" style="left:193.80px;top:771.13px;font-size:13px;line-height:16px;color:#303030;font-weight:400;font-style:normal;letter-spacing:0.093px;">BRDG_1vrhNud2Ui</div>
<div class="t" style="left:354.50px;top:771.13px;font-size:13px;line-height:16px;color:#303030;font-weight:400;font-style:normal;letter-spacing:-0.05px;">5.0000</div>
<div class="t" style="left:486.30px;top:771.13px;font-size:13px;line-height:16px;color:#303030;font-weight:400;font-style:normal;letter-spacing:0.15px;">000000007</div>
<div class="t" style="left:679.00px;top:771.13px;font-size:13px;line-height:16px;color:#303030;font-weight:400;font-style:normal;letter-spacing:-0.05px;">63</div>
<div class="t" style="left:801.30px;top:771.13px;font-size:13px;line-height:16px;color:#303030;font-weight:400;font-style:normal;letter-spacing:0.05px;">Aug 14, 2024 7:06:22 AM</div>
<div class="t" style="left:982.00px;top:771.13px;font-size:13px;line-height:16px;color:#303030;font-weight:400;font-style:normal;letter-spacing:0.05px;">Aug 14, 2024 7:06:22 AM</div>
<div class="t" style="left:1162.50px;top:771.13px;font-size:13px;line-height:16px;color:#007bdb;font-weight:400;font-style:normal;letter-spacing:-0.05px;">View Rule</div>
<div class="b" style="left:111px;top:815px;width:16px;height:16px;background:#fff;border:1px solid #adadad;border-radius:1px"></div>
<div class="t" style="left:156.00px;top:813.46px;font-size:13px;line-height:16px;color:#303030;font-weight:400;font-style:normal;letter-spacing:-0.05px;">13</div>
<div class="t" style="left:193.80px;top:813.46px;font-size:13px;line-height:16px;color:#303030;font-weight:400;font-style:normal;letter-spacing:-0.414px;">BRDG_TKJqO77lgk</div>
<div class="t" style="left:354.50px;top:813.46px;font-size:13px;line-height:16px;color:#303030;font-weight:400;font-style:normal;letter-spacing:-0.05px;">5.0000</div>
<div class="t" style="left:486.30px;top:813.46px;font-size:13px;line-height:16px;color:#303030;font-weight:400;font-style:normal;letter-spacing:0.15px;">000000007</div>
<div class="t" style="left:679.00px;top:813.46px;font-size:13px;line-height:16px;color:#303030;font-weight:400;font-style:normal;letter-spacing:-0.05px;">63</div>
<div class="t" style="left:801.30px;top:813.46px;font-size:13px;line-height:16px;color:#303030;font-weight:400;font-style:normal;letter-spacing:0.05px;">Aug 14, 2024 7:06:22 AM</div>
<div class="t" style="left:982.00px;top:813.46px;font-size:13px;line-height:16px;color:#303030;font-weight:400;font-style:normal;letter-spacing:0.05px;">Aug 14, 2024 7:06:22 AM</div>
<div class="t" style="left:1162.50px;top:813.46px;font-size:13px;line-height:16px;color:#007bdb;font-weight:400;font-style:normal;letter-spacing:-0.05px;">View Rule</div>
<div class="b" style="left:93px;top:845.29px;width:1146px;height:42.33px;background:#f5f5f5"></div>
<div class="b" style="left:111px;top:857px;width:16px;height:16px;background:#fff;border:1px solid #adadad;border-radius:1px"></div>
<div class="t" style="left:156.00px;top:855.79px;font-size:13px;line-height:16px;color:#303030;font-weight:400;font-style:normal;letter-spacing:-0.05px;">14</div>
<div class="t" style="left:193.80px;top:855.79px;font-size:13px;line-height:16px;color:#303030;font-weight:400;font-style:normal;letter-spacing:-0.207px;">BRDG_Z6UPN5jnOe</div>
<div class="t" style="left:354.50px;top:855.79px;font-size:13px;line-height:16px;color:#303030;font-weight:400;font-style:normal;letter-spacing:-0.05px;">5.0000</div>
<div class="t" style="left:486.30px;top:855.79px;font-size:13px;line-height:16px;color:#303030;font-weight:400;font-style:normal;letter-spacing:0.15px;">000000007</div>
<div class="t" style="left:679.00px;top:855.79px;font-size:13px;line-height:16px;color:#303030;font-weight:400;font-style:normal;letter-spacing:-0.05px;">63</div>
<div class="t" style="left:801.30px;top:855.79px;font-size:13px;line-height:16px;color:#303030;font-weight:400;font-style:normal;letter-spacing:0.05px;">Aug 14, 2024 7:06:22 AM</div>
<div class="t" style="left:982.00px;top:855.79px;font-size:13px;line-height:16px;color:#303030;font-weight:400;font-style:normal;letter-spacing:0.05px;">Aug 14, 2024 7:06:22 AM</div>
<div class="t" style="left:1162.50px;top:855.79px;font-size:13px;line-height:16px;color:#007bdb;font-weight:400;font-style:normal;letter-spacing:-0.05px;">View Rule</div>
<div class="b" style="left:145px;top:295px;width:0;height:598px;border-left:1px dashed #d6d6d6"></div>
<div class="b" style="left:183px;top:295px;width:0;height:598px;border-left:1px dashed #d6d6d6"></div>
<div class="b" style="left:343px;top:295px;width:0;height:598px;border-left:1px dashed #d6d6d6"></div>
<div class="b" style="left:475px;top:295px;width:0;height:598px;border-left:1px dashed #d6d6d6"></div>
<div class="b" style="left:569px;top:295px;width:0;height:598px;border-left:1px dashed #d6d6d6"></div>
<div class="b" style="left:668px;top:295px;width:0;height:598px;border-left:1px dashed #d6d6d6"></div>
<div class="b" style="left:790px;top:295px;width:0;height:598px;border-left:1px dashed #d6d6d6"></div>
<div class="b" style="left:971px;top:295px;width:0;height:598px;border-left:1px dashed #d6d6d6"></div>
<div class="b" style="left:1152px;top:295px;width:0;height:598px;border-left:1px dashed #d6d6d6"></div>
</body></html>
